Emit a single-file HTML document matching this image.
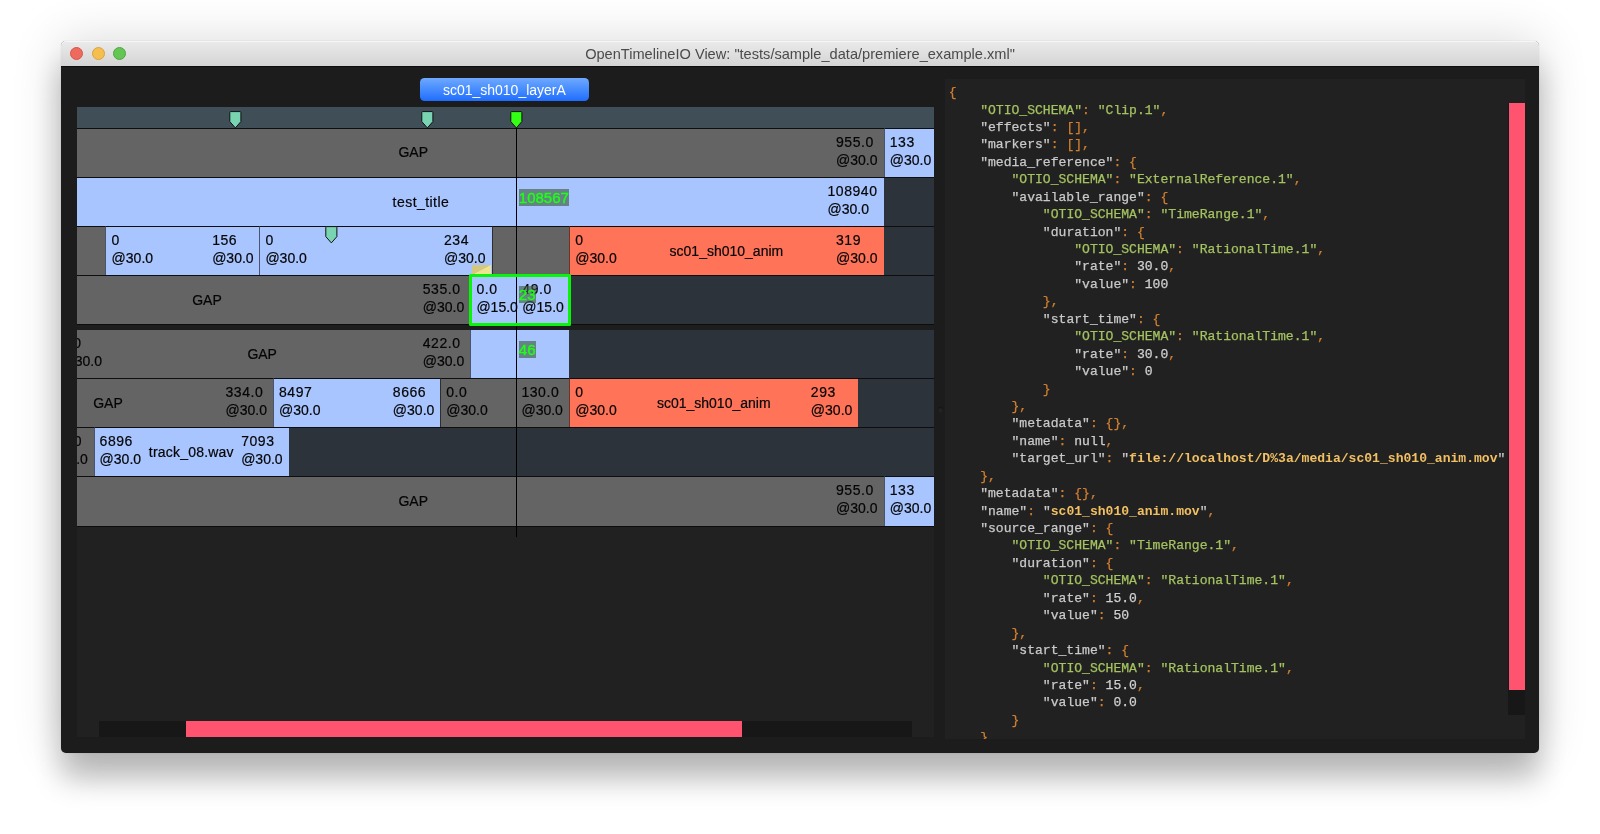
<!DOCTYPE html>
<html><head><meta charset="utf-8"><title>OpenTimelineIO View</title>
<style>
html,body{margin:0;padding:0;background:#fff;}
body{width:1600px;height:834px;position:relative;overflow:hidden;font-family:"Liberation Sans",sans-serif;}
#win{will-change:transform;position:absolute;left:61px;top:41px;width:1478px;height:712px;border-radius:5px;background:#1c1c1c;
 box-shadow:0 0 1px rgba(0,0,0,.3),0 26px 30px rgba(0,0,0,.24),0 1px 50px rgba(0,0,0,.16);}
#tb{position:absolute;left:0;top:0;right:0;height:24.8px;border-radius:5px 5px 0 0;
 background:linear-gradient(#ebebeb,#e4e4e4 30%,#d4d4d4);border-bottom:0.8px solid #0e0e0e;box-shadow:inset 0 1px 0 #f6f6f6;}
#tt{position:absolute;left:0;right:0;top:5.2px;text-align:center;font-size:14.6px;line-height:17px;color:#4b4b4b;white-space:pre}
.tl{position:absolute;top:5.9px;width:13px;height:13px;border-radius:50%;box-sizing:border-box}
#tab{position:absolute;left:358.7px;top:37.4px;width:169.4px;height:22.4px;border-radius:4.5px;
 background:linear-gradient(#6fa9ff,#4a8fff 45%,#1f6dff);color:#fff;font-size:14px;line-height:24.6px;text-align:center;white-space:pre}
#lp{position:absolute;left:16px;top:65.5px;width:857px;height:630.5px;background:#212121;overflow:hidden}
#ruler{position:absolute;left:0;top:0;width:857px;height:22px;background:#404e57}
.it{position:absolute;box-sizing:border-box;border-left:0.7px solid rgba(10,10,10,.6);border-top:0.9px solid #0e0e0e}
.trk{border-left:none}
.lb{position:absolute;font-size:14px;line-height:17.7px;color:#050505;white-space:pre;text-align:left;-webkit-text-stroke:0.2px #050505}
.lc{position:absolute;width:200px;text-align:center;font-size:14px;line-height:49.5px;color:#050505;white-space:pre;-webkit-text-stroke:0.2px #050505}
.fr{position:absolute;font-size:15px;line-height:17px;height:17px;color:#1eff14;background:rgba(60,90,60,.62);white-space:pre;padding:0 0.3px;-webkit-text-stroke:0.4px #1eff14}
.d{letter-spacing:.55px}
.mk{position:absolute;overflow:visible}
#band{position:absolute;left:0;width:857px;top:217.7px;height:5.5px;background:#1d1d1d;border-top:1px solid #0c0c0c;box-sizing:border-box}
#botline{position:absolute;left:0;width:857px;top:419.2px;height:1px;background:#0c0c0c}
#ph{position:absolute;left:438.95px;top:20px;width:1.4px;height:410px;background:#000}
#sel{position:absolute;left:392.25px;top:167.5px;width:101.75px;height:52.2px;box-sizing:border-box;border:3px solid #08f408;border-radius:1.5px}
#trn{position:absolute;left:395.1px;top:158.55px;width:19.4px;height:10.4px;background:linear-gradient(to bottom right,#d4c77e 49%,#eee38f 51%);box-sizing:border-box}
#hs{position:absolute;left:22px;top:614px;width:813px;height:16.5px;background:#171717}
#hst{position:absolute;left:87.2px;top:0;width:556px;height:16.5px;background:#ff5370}
#rp{position:absolute;left:883.7px;top:37.8px;width:580.3px;height:660.2px;background:#212121;overflow:hidden}
#js{position:absolute;left:4.1px;top:5.3px;font-family:"Liberation Mono",monospace;font-size:13.07px;white-space:pre;color:#c8c8c8;-webkit-text-stroke:0.25px}
.ln{height:17.44px;line-height:17.44px}
.k{color:#c9c9c9} .g{color:#a4c260} .p{color:#d17f2f} .n{color:#d0d0d0} .y{color:#f2c062;font-weight:bold;-webkit-text-stroke:0}
#vs{position:absolute;left:563.5px;top:24px;width:16.8px;height:612.5px;background:#171717}
#vst{position:absolute;left:0;top:0;width:16.8px;height:587px;background:#ff5370;border-left:1px solid #0b1f1f;box-sizing:border-box}
</style></head><body>
<div id="win">
 <div id="tb">
  <div class="tl" style="left:8.75px;background:#ee6a5e;border:0.5px solid #d5544a"></div>
  <div class="tl" style="left:30.6px;background:#f5be4f;border:0.5px solid #d9a33c"></div>
  <div class="tl" style="left:52.25px;background:#62c554;border:0.5px solid #4fa73f"></div>
  <div id="tt">OpenTimelineIO View: "tests/sample_data/premiere_example.xml"</div>
 </div>
 <div id="tab">sc01_sh010_layerA</div>
 <div id="lp">
  <div id="ruler"></div>
<div class="it trk" style="left:0.00px;top:21.50px;width:857.00px;height:49.20px;background:#2d333b"></div>
<div class="it trk" style="left:0.00px;top:70.70px;width:857.00px;height:49.00px;background:#2d333b"></div>
<div class="it trk" style="left:0.00px;top:119.70px;width:857.00px;height:48.90px;background:#2d333b"></div>
<div class="it trk" style="left:0.00px;top:168.60px;width:857.00px;height:49.00px;background:#2d333b"></div>
<div class="it trk" style="left:0.00px;top:222.50px;width:857.00px;height:49.20px;background:#2d333b"></div>
<div class="it trk" style="left:0.00px;top:271.70px;width:857.00px;height:49.00px;background:#2d333b"></div>
<div class="it trk" style="left:0.00px;top:320.70px;width:857.00px;height:49.00px;background:#2d333b"></div>
<div class="it trk" style="left:0.00px;top:369.70px;width:857.00px;height:49.50px;background:#2d333b"></div>
<div class="it " style="left:-133.00px;top:21.50px;width:939.75px;height:49.20px;background:#646464"></div>
<div class="it " style="left:806.75px;top:21.50px;width:50.25px;height:49.20px;background:#a8c5ff"></div>
<div class="lc" style="left:236.25px;top:21.50px">GAP</div>
<div class="lb" style="right:56.50px;top:27.70px"><span class="d">955.0</span><br>@30.0</div>
<div class="lb" style="left:812.75px;top:27.70px"><span class="d">133</span><br>@30.0</div>
<div class="it " style="left:-133.00px;top:70.70px;width:939.75px;height:49.00px;background:#a8c5ff"></div>
<div class="lc" style="left:243.95px;top:71.50px"><span style="letter-spacing:.45px">test_title</span></div>
<div class="lb" style="right:56.50px;top:76.90px"><span class="d">108940</span><br>@30.0</div>
<div class="it " style="left:-133.00px;top:119.70px;width:161.00px;height:48.90px;background:#646464"></div>
<div class="it " style="left:28.00px;top:119.70px;width:154.40px;height:48.90px;background:#a8c5ff"></div>
<div class="it " style="left:182.40px;top:119.70px;width:232.20px;height:48.90px;background:#a8c5ff"></div>
<div class="it " style="left:414.60px;top:119.70px;width:77.20px;height:48.90px;background:#646464"></div>
<div class="it " style="left:491.80px;top:119.70px;width:314.95px;height:48.90px;background:#ff7359"></div>
<div class="lb" style="left:34.60px;top:125.90px"><span class="d">0</span><br>@30.0</div>
<div class="lb" style="right:680.40px;top:125.90px"><span class="d">156</span><br>@30.0</div>
<div class="lb" style="left:188.40px;top:125.90px"><span class="d">0</span><br>@30.0</div>
<div class="lb" style="right:448.50px;top:125.90px"><span class="d">234</span><br>@30.0</div>
<div class="lb" style="left:498.25px;top:125.90px"><span class="d">0</span><br>@30.0</div>
<div class="lc" style="left:549.40px;top:120.50px">sc01_sh010_anim</div>
<div class="lb" style="right:56.50px;top:125.90px"><span class="d">319</span><br>@30.0</div>
<div class="it " style="left:-133.00px;top:168.60px;width:526.40px;height:49.00px;background:#646464"></div>
<div class="it " style="left:393.40px;top:168.60px;width:99.20px;height:49.00px;background:#a8c5ff"></div>
<div class="lc" style="left:30.00px;top:169.40px">GAP</div>
<div class="lb" style="right:469.80px;top:174.80px"><span class="d">535.0</span><br>@30.0</div>
<div class="lb" style="left:399.40px;top:174.80px"><span class="d">0.0</span><br>@15.0</div>
<div class="lb" style="right:370.20px;top:174.80px"><span class="d">49.0</span><br>@15.0</div>
<div class="it " style="left:-22.50px;top:222.50px;width:415.90px;height:49.20px;background:#646464"></div>
<div class="it " style="left:393.40px;top:222.50px;width:98.60px;height:49.20px;background:#a8c5ff"></div>
<div class="lb" style="left:-16.50px;top:228.70px"><span class="d">0.0</span><br>@30.0</div>
<div class="lc" style="left:85.20px;top:223.30px">GAP</div>
<div class="lb" style="right:469.80px;top:228.70px"><span class="d">422.0</span><br>@30.0</div>
<div class="it " style="left:-133.00px;top:271.70px;width:328.90px;height:49.00px;background:#646464"></div>
<div class="it " style="left:195.90px;top:271.70px;width:167.35px;height:49.00px;background:#a8c5ff"></div>
<div class="it " style="left:363.25px;top:271.70px;width:128.55px;height:49.00px;background:#646464"></div>
<div class="it " style="left:491.80px;top:271.70px;width:289.45px;height:49.00px;background:#ff7359"></div>
<div class="lc" style="left:-69.00px;top:272.50px">GAP</div>
<div class="lb" style="right:667.00px;top:277.90px"><span class="d">334.0</span><br>@30.0</div>
<div class="lb" style="left:202.00px;top:277.90px"><span class="d">8497</span><br>@30.0</div>
<div class="lb" style="right:499.70px;top:277.90px"><span class="d">8666</span><br>@30.0</div>
<div class="lb" style="left:369.25px;top:277.90px"><span class="d">0.0</span><br>@30.0</div>
<div class="lb" style="right:371.10px;top:277.90px"><span class="d">130.0</span><br>@30.0</div>
<div class="lb" style="left:498.25px;top:277.90px"><span class="d">0</span><br>@30.0</div>
<div class="lc" style="left:536.75px;top:272.50px">sc01_sh010_anim</div>
<div class="lb" style="right:81.70px;top:277.90px"><span class="d">293</span><br>@30.0</div>
<div class="it " style="left:-36.60px;top:320.70px;width:53.60px;height:49.00px;background:#646464"></div>
<div class="it " style="left:17.00px;top:320.70px;width:194.80px;height:49.00px;background:#a8c5ff"></div>
<div class="lb" style="left:-30.60px;top:326.90px">130.0<br>@30.0</div>
<div class="lb" style="left:22.60px;top:326.90px"><span class="d">6896</span><br>@30.0</div>
<div class="lc" style="left:14.30px;top:321.50px"><span style="letter-spacing:.2px">track_08.wav</span></div>
<div class="lb" style="right:651.40px;top:326.90px"><span class="d">7093</span><br>@30.0</div>
<div class="it " style="left:-133.00px;top:369.70px;width:939.75px;height:49.50px;background:#646464"></div>
<div class="it " style="left:806.75px;top:369.70px;width:50.25px;height:49.50px;background:#a8c5ff"></div>
<div class="lc" style="left:236.25px;top:370.50px">GAP</div>
<div class="lb" style="right:56.50px;top:375.90px"><span class="d">955.0</span><br>@30.0</div>
<div class="lb" style="left:812.75px;top:375.90px"><span class="d">133</span><br>@30.0</div>
  <div id="band"></div>
  <div id="botline"></div>
  <div id="trn"></div>
  <svg class="mk" style="left:152.45px;top:4.90px" width="12.7" height="17.5" viewBox="0 0 12.7 17.5"><path d="M1.6 0.6 H11.1 Q11.9 0.6 11.9 1.4 V10.6 L6.35 16.9 L0.8 10.6 V1.4 Q0.8 0.6 1.6 0.6 Z" fill="#79d4b1" stroke="#111" stroke-width="1"/></svg><svg class="mk" style="left:343.55px;top:4.90px" width="12.7" height="17.5" viewBox="0 0 12.7 17.5"><path d="M1.6 0.6 H11.1 Q11.9 0.6 11.9 1.4 V10.6 L6.35 16.9 L0.8 10.6 V1.4 Q0.8 0.6 1.6 0.6 Z" fill="#79d4b1" stroke="#111" stroke-width="1"/></svg><svg class="mk" style="left:248.35px;top:119.40px" width="12.7" height="17.5" viewBox="0 0 12.7 17.5"><path d="M1.6 0.6 H11.1 Q11.9 0.6 11.9 1.4 V10.6 L6.35 16.9 L0.8 10.6 V1.4 Q0.8 0.6 1.6 0.6 Z" fill="#79d4b1" stroke="#111" stroke-width="1"/></svg>
  <div id="ph"></div>
  <svg class="mk" style="left:432.75px;top:4.90px" width="12.7" height="17.5" viewBox="0 0 12.7 17.5"><path d="M1.6 0.6 H11.1 Q11.9 0.6 11.9 1.4 V10.6 L6.35 16.9 L0.8 10.6 V1.4 Q0.8 0.6 1.6 0.6 Z" fill="#33ff14" stroke="#111" stroke-width="1"/></svg>
  <div id="sel"></div>
  <div class="fr" style="left:441.5px;top:82.0px">108567</div>
  <div class="fr" style="left:441.5px;top:179.8px">23</div>
  <div class="fr" style="left:441.5px;top:234.2px">46</div>
  <div id="hs"><div id="hst"></div></div>
 </div>
 <div style="position:absolute;left:877px;top:367px;width:5px;height:5px;border-radius:50%;background:#212121;box-shadow:0 -1px 1px #151515"></div>
 <div id="rp">
  <div id="js"><div class="ln"><span class="p">{</span></div><div class="ln">    <span class="g">"OTIO_SCHEMA"</span><span class="p">: </span><span class="g">"Clip.1"</span><span class="p">,</span></div><div class="ln">    <span class="k">"effects"</span><span class="p">: </span><span class="p">[]</span><span class="p">,</span></div><div class="ln">    <span class="k">"markers"</span><span class="p">: </span><span class="p">[]</span><span class="p">,</span></div><div class="ln">    <span class="k">"media_reference"</span><span class="p">: {</span></div><div class="ln">        <span class="g">"OTIO_SCHEMA"</span><span class="p">: </span><span class="g">"ExternalReference.1"</span><span class="p">,</span></div><div class="ln">        <span class="k">"available_range"</span><span class="p">: {</span></div><div class="ln">            <span class="g">"OTIO_SCHEMA"</span><span class="p">: </span><span class="g">"TimeRange.1"</span><span class="p">,</span></div><div class="ln">            <span class="k">"duration"</span><span class="p">: {</span></div><div class="ln">                <span class="g">"OTIO_SCHEMA"</span><span class="p">: </span><span class="g">"RationalTime.1"</span><span class="p">,</span></div><div class="ln">                <span class="k">"rate"</span><span class="p">: </span><span class="n">30.0</span><span class="p">,</span></div><div class="ln">                <span class="k">"value"</span><span class="p">: </span><span class="n">100</span></div><div class="ln">            <span class="p">},</span></div><div class="ln">            <span class="k">"start_time"</span><span class="p">: {</span></div><div class="ln">                <span class="g">"OTIO_SCHEMA"</span><span class="p">: </span><span class="g">"RationalTime.1"</span><span class="p">,</span></div><div class="ln">                <span class="k">"rate"</span><span class="p">: </span><span class="n">30.0</span><span class="p">,</span></div><div class="ln">                <span class="k">"value"</span><span class="p">: </span><span class="n">0</span></div><div class="ln">            <span class="p">}</span></div><div class="ln">        <span class="p">},</span></div><div class="ln">        <span class="k">"metadata"</span><span class="p">: </span><span class="p">{}</span><span class="p">,</span></div><div class="ln">        <span class="k">"name"</span><span class="p">: </span><span class="n">null</span><span class="p">,</span></div><div class="ln">        <span class="k">"target_url"</span><span class="p">: </span><span class="k">"</span><span class="y">file://localhost/D%3a/media/sc01_sh010_anim.mov</span><span class="k">"</span></div><div class="ln">    <span class="p">},</span></div><div class="ln">    <span class="k">"metadata"</span><span class="p">: </span><span class="p">{}</span><span class="p">,</span></div><div class="ln">    <span class="k">"name"</span><span class="p">: </span><span class="k">"</span><span class="y">sc01_sh010_anim.mov</span><span class="k">"</span><span class="p">,</span></div><div class="ln">    <span class="k">"source_range"</span><span class="p">: {</span></div><div class="ln">        <span class="g">"OTIO_SCHEMA"</span><span class="p">: </span><span class="g">"TimeRange.1"</span><span class="p">,</span></div><div class="ln">        <span class="k">"duration"</span><span class="p">: {</span></div><div class="ln">            <span class="g">"OTIO_SCHEMA"</span><span class="p">: </span><span class="g">"RationalTime.1"</span><span class="p">,</span></div><div class="ln">            <span class="k">"rate"</span><span class="p">: </span><span class="n">15.0</span><span class="p">,</span></div><div class="ln">            <span class="k">"value"</span><span class="p">: </span><span class="n">50</span></div><div class="ln">        <span class="p">},</span></div><div class="ln">        <span class="k">"start_time"</span><span class="p">: {</span></div><div class="ln">            <span class="g">"OTIO_SCHEMA"</span><span class="p">: </span><span class="g">"RationalTime.1"</span><span class="p">,</span></div><div class="ln">            <span class="k">"rate"</span><span class="p">: </span><span class="n">15.0</span><span class="p">,</span></div><div class="ln">            <span class="k">"value"</span><span class="p">: </span><span class="n">0.0</span></div><div class="ln">        <span class="p">}</span></div><div class="ln">    <span class="p">}</span></div></div>
  <div id="vs"><div id="vst"></div></div>
 </div>
</div>
</body></html>
